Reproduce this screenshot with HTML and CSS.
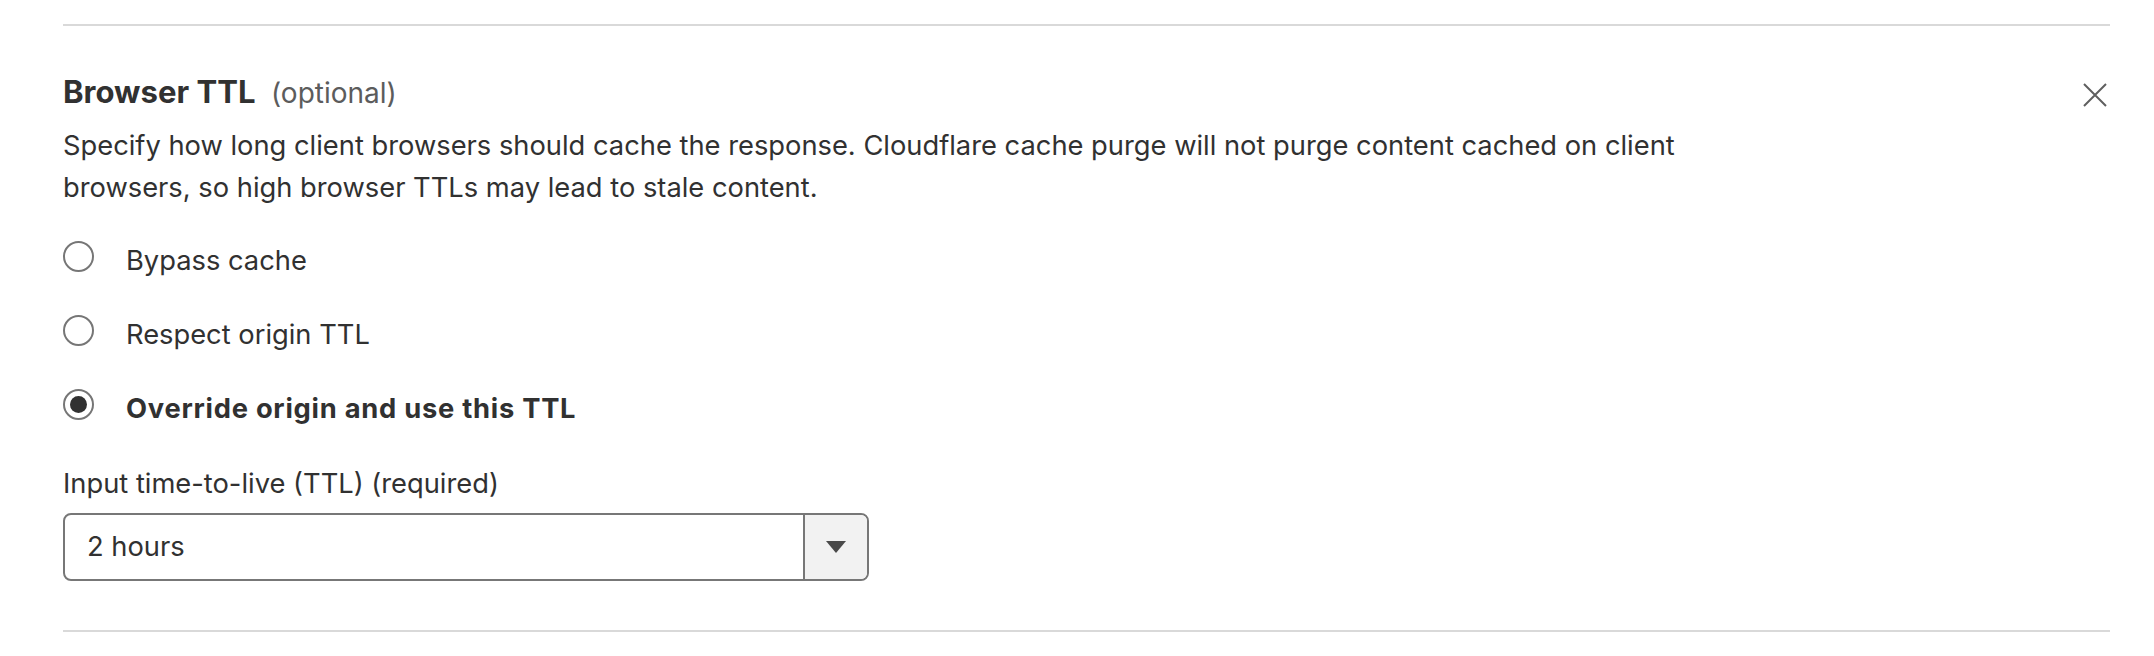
FILE: index.html
```html
<!DOCTYPE html>
<html lang="en">
<head>
<meta charset="utf-8">
<title>Browser TTL</title>
<link rel="stylesheet" href="styles.css">
</head>
<body>
<section class="panel">
  <div class="panel-body">
    <div class="header">
      <h2 class="title">Browser TTL <span class="optional">(optional)</span></h2>
      <button class="close" aria-label="Close">
        <svg width="24" height="24" viewBox="0 0 24 24"><path d="M1 1 L23 23 M23 1 L1 23" stroke="#5f5f5f" stroke-width="2" fill="none"/></svg>
      </button>
    </div>
    <p class="desc">Specify how long client browsers should cache the response. Cloudflare cache purge will not purge content cached on client browsers, so high browser TTLs may lead to stale content.</p>
    <div class="radios">
      <label class="radio"><span class="circle"></span><span class="radio-label">Bypass cache</span></label>
      <label class="radio"><span class="circle"></span><span class="radio-label">Respect origin TTL</span></label>
      <label class="radio checked"><span class="circle"></span><span class="radio-label">Override origin and use this TTL</span></label>
    </div>
    <div class="field">
      <div class="field-label">Input time-to-live (TTL) (required)</div>
      <div class="select">
        <div class="select-value">2 hours</div>
        <div class="select-btn"><span class="arrow"></span></div>
      </div>
    </div>
  </div>
</section>
</body>
</html>
```
FILE: styles.css
```css
html, body {
  margin: 0;
  padding: 0;
  background: #ffffff;
}
body {
  font-family: Inter, "Noto Sans", "Liberation Sans", sans-serif;
  color: #313131;
  font-size: 27.3px;
  line-height: 40px;
}
.panel {
  padding: 24px 44px 0 63px;
}
.panel-body {
  border-top: 2px solid #d9d9d9;
  border-bottom: 2px solid #d9d9d9;
  padding: 46px 0 49px 0;
}
.header {
  display: flex;
  justify-content: space-between;
  align-items: flex-start;
}
.title {
  margin: 0;
  font-size: 31.1px;
  line-height: 40px;
  font-weight: 700;
  color: #313131;
}
.optional {
  font-size: 28px;
  font-weight: 400;
  color: #5c5c5c;
  margin-left: 8px;
}
.close {
  border: 0;
  background: none;
  padding: 0;
  margin: 11px 3px 0 0;
  width: 24px;
  height: 24px;
  display: flex;
}
.desc {
  margin: 12px 0 0 0;
  line-height: 42px;
  max-width: 1700px;
}
.radios {
  display: flex;
  flex-direction: column;
  gap: 34px;
  margin-top: 32px;
}
.radio {
  display: flex;
  align-items: flex-start;
  gap: 32px;
}
.circle {
  width: 31px;
  height: 31px;
  box-sizing: border-box;
  border: 2px solid #767676;
  border-radius: 50%;
  display: flex;
  align-items: center;
  justify-content: center;
  flex: none;
}
.checked .circle::after {
  content: "";
  width: 17px;
  height: 17px;
  border-radius: 50%;
  background: #313131;
}
.checked .radio-label {
  font-weight: 700;
  letter-spacing: 0.75px;
}
.field {
  margin-top: 35px;
}
.field-label {
  margin-bottom: 9px;
}
.select {
  display: flex;
  width: 806px;
  height: 68px;
  box-sizing: border-box;
  border: 2px solid #777777;
  border-radius: 8px;
  overflow: hidden;
}
.select-value {
  flex: 1;
  padding: 0 22px;
  display: flex;
  align-items: center;
}
.select-btn {
  width: 62px;
  border-left: 2px solid #777777;
  background: #f2f2f2;
  display: flex;
  align-items: center;
  justify-content: center;
}
.arrow {
  width: 0;
  height: 0;
  border-left: 10px solid transparent;
  border-right: 10px solid transparent;
  border-top: 12px solid #4a4a4a;
}
```
